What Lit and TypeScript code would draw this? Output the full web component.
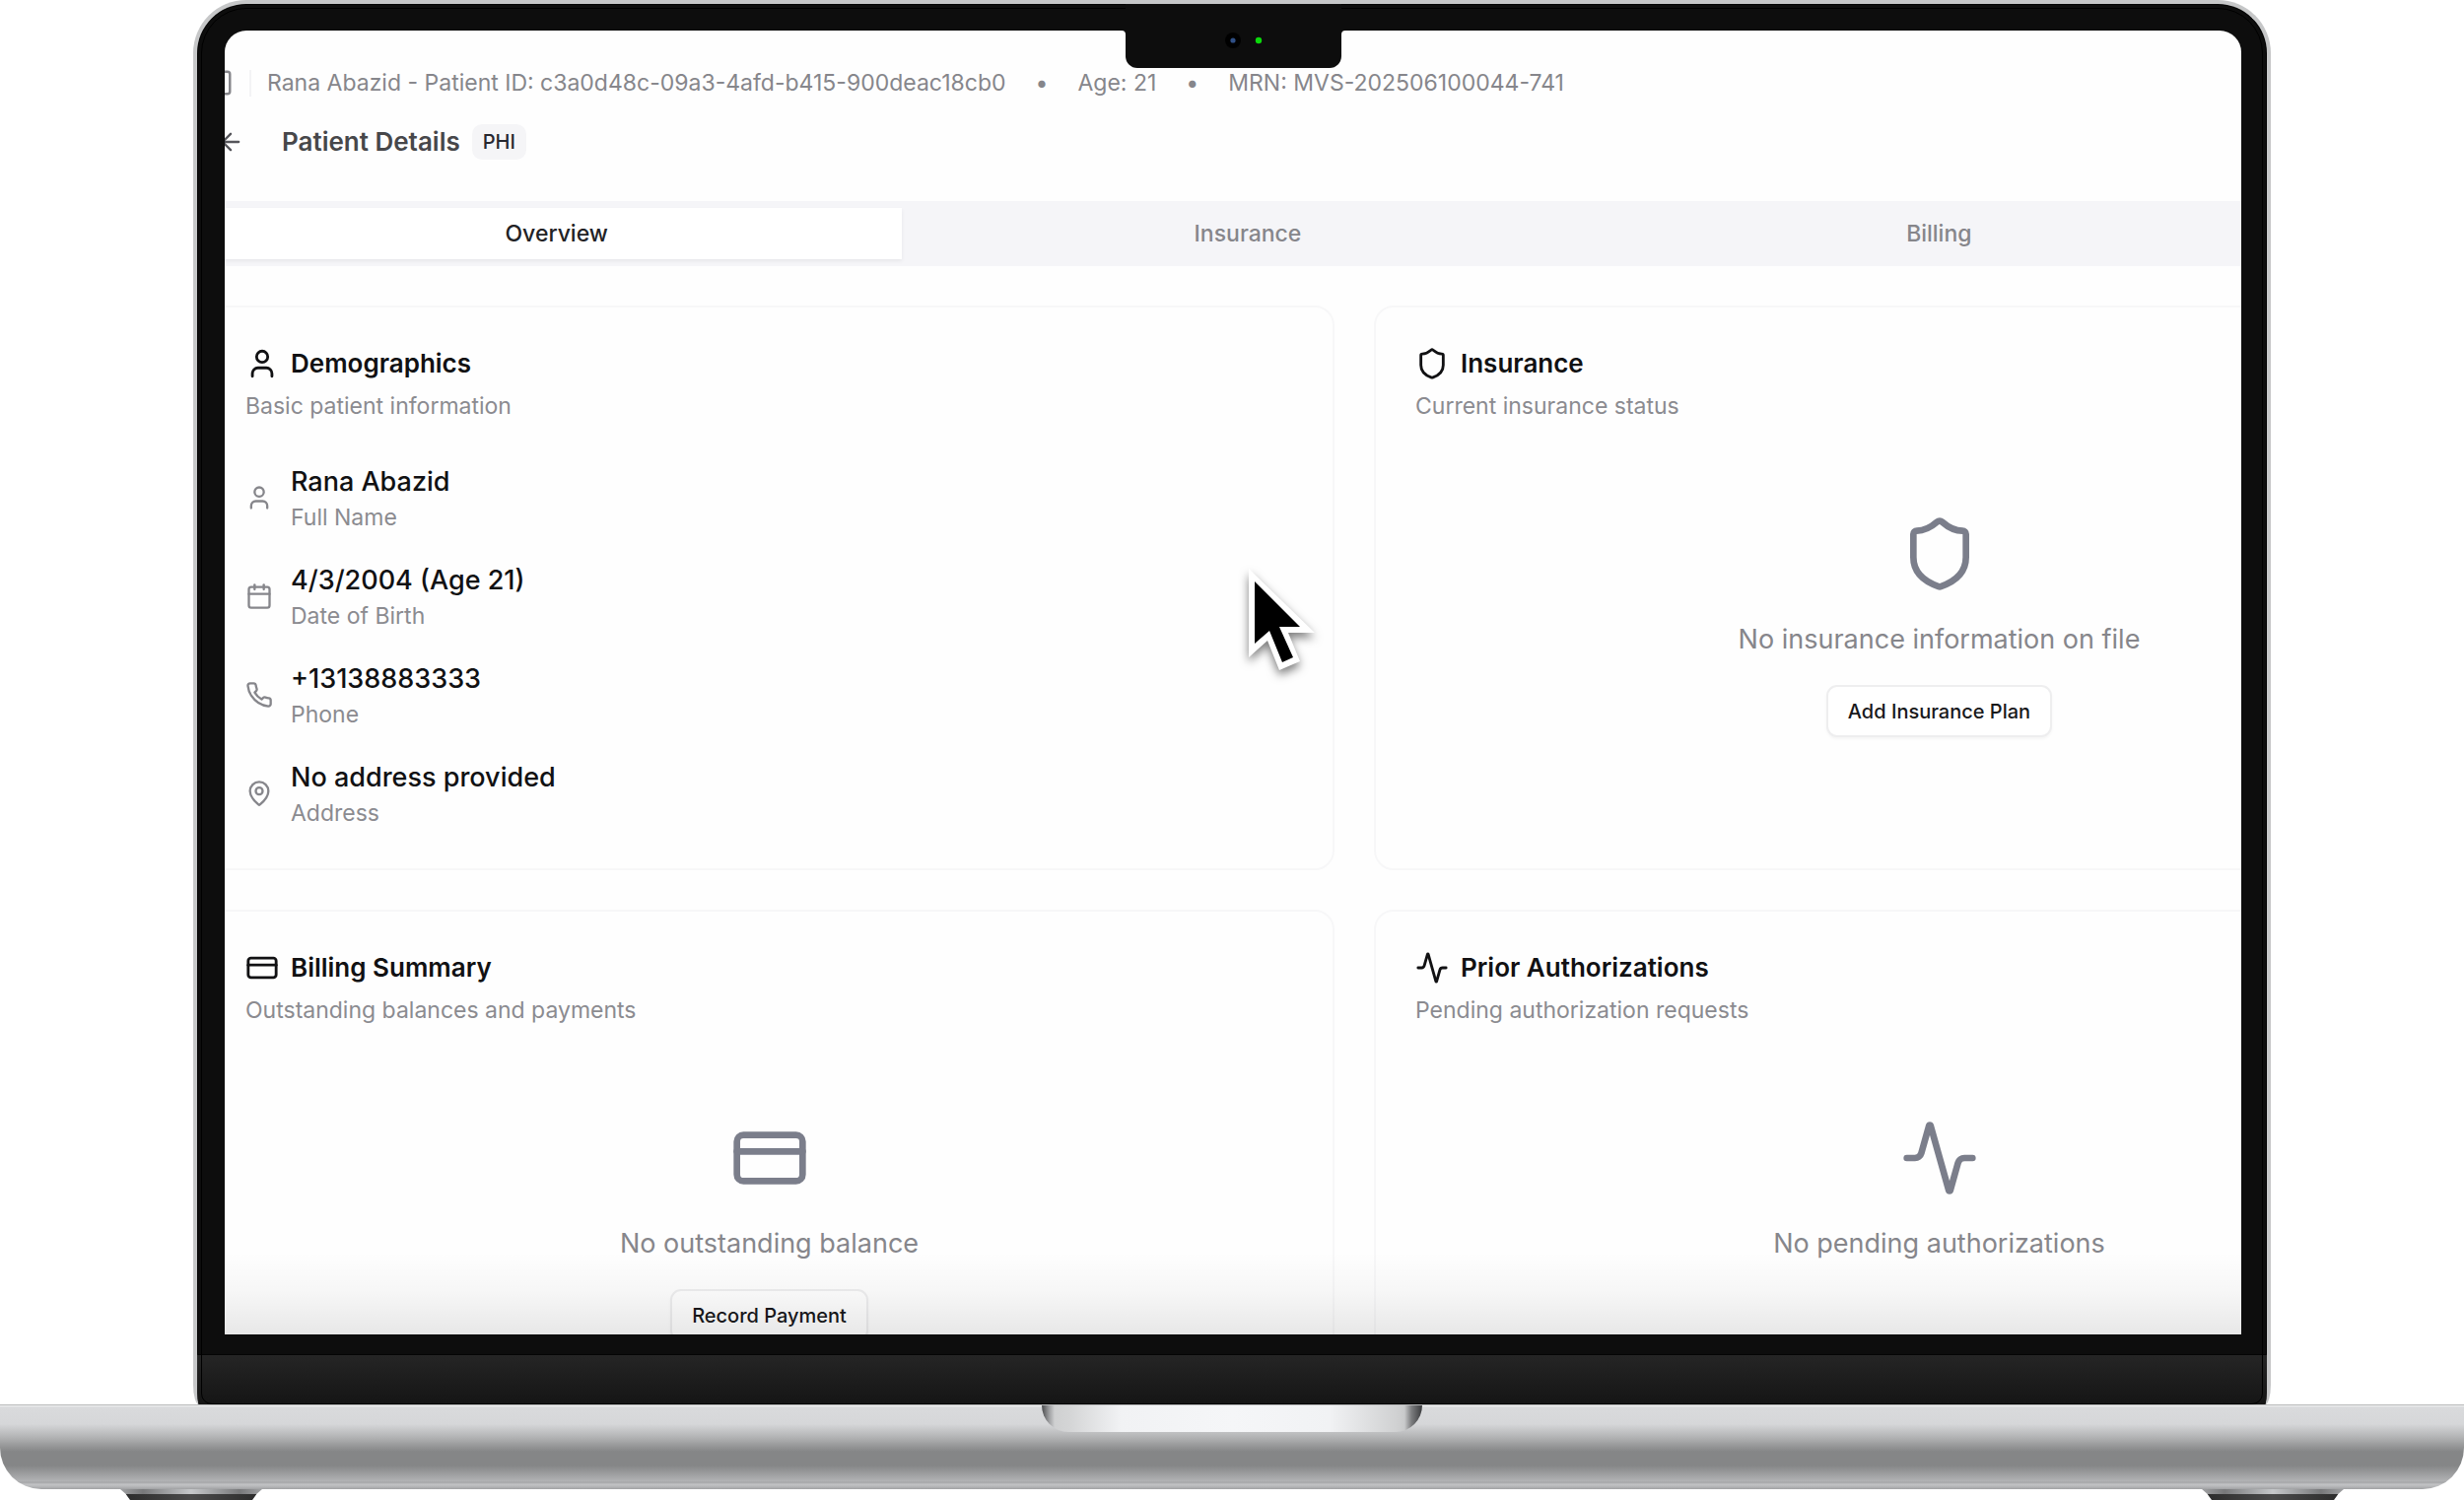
import { LitElement, html, css, svg, nothing, type SVGTemplateResult, type TemplateResult } from "lit";
import { customElement, property, state } from "lit/decorators.js";
import { classMap } from "lit/directives/class-map.js";

/* Stroke icons, all on a 24-unit grid. */
const ICONS: Record<string, SVGTemplateResult> = {
  panel: svg`<rect x="3" y="3" width="18" height="18" rx="2"/><path d="M9 3v18"/>`,
  back: svg`<path d="m12 19-7-7 7-7"/><path d="M19 12H5"/>`,
  user: svg`<path d="M19 21v-2a4 4 0 0 0-4-4H9a4 4 0 0 0-4 4v2"/><circle cx="12" cy="7" r="4"/>`,
  calendar: svg`<path d="M8 2v4"/><path d="M16 2v4"/><rect x="3" y="4" width="18" height="18" rx="2"/><path d="M3 10h18"/>`,
  phone: svg`<path d="M22 16.92v3a2 2 0 0 1-2.18 2 19.79 19.79 0 0 1-8.63-3.07 19.5 19.5 0 0 1-6-6 19.79 19.79 0 0 1-3.07-8.67A2 2 0 0 1 4.11 2h3a2 2 0 0 1 2 1.72 12.84 12.84 0 0 0 .7 2.81 2 2 0 0 1-.45 2.11L8.09 9.91a16 16 0 0 0 6 6l1.27-1.27a2 2 0 0 1 2.11-.45 12.84 12.84 0 0 0 2.81.7A2 2 0 0 1 22 16.92z"/>`,
  pin: svg`<path d="M20 10c0 4.993-5.539 10.193-7.399 11.799a1 1 0 0 1-1.202 0C9.539 20.193 4 14.993 4 10a8 8 0 0 1 16 0"/><circle cx="12" cy="10" r="3"/>`,
  shield: svg`<path d="M20 13c0 5-3.5 7.5-7.66 8.95a1 1 0 0 1-.67-.01C7.5 20.5 4 18 4 13V6a1 1 0 0 1 1-1c2 0 4.5-1.2 6.24-2.72a1.17 1.17 0 0 1 1.52 0C14.51 3.81 17 5 19 5a1 1 0 0 1 1 1z"/>`,
  card: svg`<rect x="2" y="5" width="20" height="14" rx="2"/><path d="M2 10h20"/>`,
  activity: svg`<path d="M22 12h-2.48a2 2 0 0 0-1.93 1.46l-2.35 8.36a.25.25 0 0 1-.48 0L9.24 2.18a.25.25 0 0 0-.48 0l-2.35 8.36A2 2 0 0 1 4.49 12H2"/>`,
};

const icon = (name: string, cls: string): TemplateResult => html`
  <svg class="icon ${cls}" viewBox="0 0 24 24" aria-hidden="true">${ICONS[name]}</svg>
`;

const iconStyles = css`
  .icon {
    display: block;
    flex: none;
    fill: none;
    stroke: currentColor;
    stroke-width: 2;
    stroke-linecap: round;
    stroke-linejoin: round;
  }
`;

/* A bordered panel with an icon heading; its body is slotted in. */
@customElement("info-card")
class InfoCard extends LitElement {
  @property() icon = "user";
  @property() heading = "";
  @property() description = "";

  static styles = [
    iconStyles,
    css`
      :host {
        display: flex;
        flex-direction: column;
        gap: 40px;
        box-sizing: border-box;
        min-height: 573px;
        padding: 40px 40px 38px;
        border: 2px solid #f7f7f8;
        border-radius: 20px;
      }
      .head {
        display: flex;
        flex-direction: column;
        gap: 9px;
      }
      .title {
        display: flex;
        align-items: center;
        gap: 12px;
      }
      .title-icon {
        width: 34px;
        height: 34px;
      }
      h2 {
        margin: 0;
        font-size: 26px;
        line-height: 34px;
        font-weight: 600;
      }
      p {
        margin: 0;
        font-size: 23px;
        line-height: 34px;
        color: #8b8b90;
      }
    `,
  ];

  render() {
    return html`
      <div class="head">
        <div class="title">${icon(this.icon, "title-icon")}<h2>${this.heading}</h2></div>
        <p>${this.description}</p>
      </div>
      <slot></slot>
    `;
  }
}

/* Centred placeholder: large icon, message and an optional action. */
@customElement("empty-state")
class EmptyState extends LitElement {
  @property() icon = "shield";
  @property() message = "";
  @property() action = "";

  static styles = [
    iconStyles,
    css`
      :host {
        display: flex;
        flex-direction: column;
        align-items: center;
        padding-top: 53px;
      }
      .large {
        width: 80px;
        height: 80px;
        color: #7b7e8b;
      }
      p {
        margin: 27px 0 26px;
        font-size: 27px;
        line-height: 40px;
        color: #86868b;
      }
      button {
        height: 53px;
        padding: 0 20px;
        border: 2px solid #eeeeef;
        border-radius: 11px;
        background: #fff;
        box-shadow: 0 2px 3px rgba(0, 0, 0, 0.04);
        font: 500 20px/30px Inter, "Liberation Sans", sans-serif;
        color: #18181b;
      }
    `,
  ];

  render() {
    return html`
      ${icon(this.icon, "large")}
      <p>${this.message}</p>
      ${this.action ? html`<button type="button">${this.action}</button>` : nothing}
    `;
  }
}

/* The patient record page. */
@customElement("patient-page")
class PatientPage extends LitElement {
  @state() private tab = "Overview";

  private tabs = ["Overview", "Insurance", "Billing"];

  private facts = [
    { icon: "user", value: "Rana Abazid", label: "Full Name" },
    { icon: "calendar", value: "4/3/2004 (Age 21)", label: "Date of Birth" },
    { icon: "phone", value: "+13138883333", label: "Phone" },
    { icon: "pin", value: "No address provided", label: "Address" },
  ];

  static styles = [
    iconStyles,
    css`
      :host {
        display: block;
        /* The page is wider than the screen it is shown on. */
        margin: 0 -267px 0 -21px;
        padding-top: 31px;
        font-family: Inter, "Liberation Sans", sans-serif;
        color: #111113;
      }
      button {
        border: 0;
        padding: 0;
        background: none;
        font: inherit;
        color: inherit;
      }
      .crumbs {
        display: flex;
        align-items: center;
        height: 44px;
        font-size: 23px;
        color: #86868b;
      }
      .nav-icon {
        width: 30px;
        height: 30px;
      }
      .rule {
        width: 2px;
        height: 27px;
        margin: 0 16px;
        background: #f3f3f5;
      }
      .meta {
        display: flex;
        gap: 30px;
      }
      .heading {
        display: flex;
        align-items: center;
        height: 36px;
        margin-top: 20px;
      }
      .back {
        display: grid;
        place-items: center;
        width: 54px;
        height: 36px;
        margin-right: 25px;
        color: #55555a;
      }
      .small {
        width: 28px;
        height: 28px;
      }
      h1 {
        margin: 0;
        font-size: 26px;
        line-height: 36px;
        font-weight: 600;
        color: #47474a;
      }
      .badge {
        margin-left: 12px;
        padding: 0 11px;
        border-radius: 10px;
        background: #f5f5f7;
        font-size: 20px;
        line-height: 36px;
        font-weight: 500;
        color: #27272f;
      }
      .tabs {
        display: grid;
        grid-template-columns: repeat(3, 1fr);
        height: 66px;
        box-sizing: border-box;
        margin: 42px 216px 40px 0;
        padding: 7px;
        background: #f5f5f8;
      }
      .tab {
        font-size: 23px;
        font-weight: 500;
        color: #86868b;
      }
      .tab.active {
        background: #fff;
        box-shadow: 0 2px 4px rgba(0, 0, 0, 0.06);
        color: #222225;
      }
      .cards {
        display: grid;
        grid-template-columns: 1fr 1fr;
        gap: 40px;
      }
      .facts {
        display: flex;
        flex-direction: column;
        gap: 26px;
        margin: 0;
        padding: 0;
        list-style: none;
      }
      .fact {
        display: flex;
        align-items: center;
        gap: 18px;
      }
      .fact-icon {
        margin-bottom: 3px;
        color: #86868b;
      }
      .value {
        font-size: 27px;
        line-height: 39px;
        font-weight: 500;
      }
      .label {
        font-size: 23px;
        line-height: 35px;
        color: #8b8b90;
      }
    `,
  ];

  render() {
    return html`
      <nav class="crumbs">
        <button type="button" aria-label="Toggle sidebar">${icon("panel", "nav-icon")}</button>
        <span class="rule"></span>
        <div class="meta">
          <span>Rana Abazid - Patient ID: c3a0d48c-09a3-4afd-b415-900deac18cb0</span>
          <span>•</span>
          <span>Age: 21</span>
          <span>•</span>
          <span>MRN: MVS-202506100044-741</span>
        </div>
      </nav>
      <header class="heading">
        <button class="back" type="button" aria-label="Back">${icon("back", "small")}</button>
        <h1>Patient Details</h1>
        <span class="badge">PHI</span>
      </header>
      <div class="tabs" role="tablist">
        ${this.tabs.map(
          (t) => html`<button
            type="button"
            role="tab"
            class=${classMap({ tab: true, active: t === this.tab })}
            aria-selected=${t === this.tab ? "true" : "false"}
            @click=${() => (this.tab = t)}
          >${t}</button>`,
        )}
      </div>
      <main class="cards">
        <info-card icon="user" heading="Demographics" description="Basic patient information">
          <ul class="facts">
            ${this.facts.map(
              (f) => html`<li class="fact">
                ${icon(f.icon, "small fact-icon")}
                <div>
                  <div class="value">${f.value}</div>
                  <div class="label">${f.label}</div>
                </div>
              </li>`,
            )}
          </ul>
        </info-card>
        <info-card icon="shield" heading="Insurance" description="Current insurance status">
          <empty-state icon="shield" message="No insurance information on file" action="Add Insurance Plan"></empty-state>
        </info-card>
        <info-card icon="card" heading="Billing Summary" description="Outstanding balances and payments">
          <empty-state icon="card" message="No outstanding balance" action="Record Payment"></empty-state>
        </info-card>
        <info-card icon="activity" heading="Prior Authorizations" description="Pending authorization requests">
          <empty-state icon="activity" message="No pending authorizations"></empty-state>
        </info-card>
      </main>
    `;
  }
}

/* Laptop frame with the page on its screen. */
@customElement("app-root")
class AppRoot extends LitElement {
  static styles = css`
    :host {
      display: block;
      overflow: hidden;
      background: #fff;
    }
    .lid {
      position: relative;
      box-sizing: border-box;
      width: 84.32%;
      margin: 0 auto;
      border: solid #c6c7c8;
      border-width: 4px 4px 0;
      border-radius: 54px 54px 6px 6px / 54px 54px 20px 20px;
      background: #0d0d0d;
      box-shadow: inset 0 0 0 1px #000;
      overflow: hidden;
    }
    .bezel {
      padding: 27px 26px 20px 28px;
    }
    .outline {
      position: absolute;
      inset: 4px 4px 0;
      border: 1px solid #000;
      border-radius: 46px 46px 11px 11px;
      pointer-events: none;
    }
    .screen {
      position: relative;
      aspect-ratio: 2046 / 1323;
      border-radius: 22px 22px 0 0;
      background: #fefefe;
      overflow: hidden;
    }
    .shade {
      position: absolute;
      inset: auto 0 0;
      height: 84px;
      background: linear-gradient(rgba(0, 0, 0, 0), rgba(0, 0, 0, 0.03) 50%, rgba(0, 0, 0, 0.09));
      pointer-events: none;
    }
    .notch {
      position: absolute;
      top: 0;
      left: 50%;
      width: 219px;
      height: 65px;
      margin-left: -108px;
      border-radius: 0 0 12px 12px;
      background: #0d0d0d;
    }
    .notch svg {
      display: block;
      width: 219px;
      height: 65px;
      overflow: visible;
    }
    .cursor {
      position: absolute;
      left: 50.8%;
      top: 41.3%;
      width: 68px;
      height: 104px;
      overflow: visible;
      filter: drop-shadow(0 5px 5px rgba(0, 0, 0, 0.5));
      pointer-events: none;
    }
    .chin {
      height: 51px;
      border-top: 1px solid #050505;
      box-sizing: border-box;
      background: linear-gradient(#252525, #151515);
    }
    .base {
      display: flex;
      justify-content: center;
      height: 86px;
      box-sizing: border-box;
      border-top: 1px solid #b9babb;
      border-radius: 0 0 42px 42px;
      background: linear-gradient(
        #f1f1f2 0,
        #d9dadc 2px,
        #d6d7d9 19px,
        #b3b4b5 32px,
        #858687 47px,
        #858687 61px,
        #b2b3b5 77px,
        #a2a3a5 78px,
        #c2c3c5 80px,
        #b9babc 82px,
        #a0a1a3 85px
      );
    }
    .grip {
      width: 386px;
      height: 27px;
      border-radius: 0 0 27px 27px;
      background: linear-gradient(
        90deg,
        #4b4c4e 0,
        #a3a4a6 8px,
        #cfd0d1 13px,
        #d4d5d6 28px,
        #f1f2f4 80px,
        #f5f6f8 193px,
        #f1f2f4 292px,
        #d0d1d2 360px,
        #c9cacb 368px,
        #7c7d7f 375px,
        #3a3b3d 386px
      );
    }
    .feet {
      display: flex;
      justify-content: space-between;
      padding: 0 122px;
    }
    .foot {
      width: 144px;
      height: 11px;
      clip-path: polygon(0 0, 100% 0, 96% 45%, 93% 100%, 7% 100%, 4% 45%);
      background:
        linear-gradient(90deg, #2a2a2a, #4a4a4a 50%, #2a2a2a) 0 5px / 100% 6px no-repeat,
        linear-gradient(90deg, #a0a1a3, #77787a 16%, #c6c8ca 50%, #77787a 84%, #a0a1a3);
    }
  `;

  render() {
    return html`
      <div class="lid">
        <div class="bezel">
          <div class="screen">
            <patient-page></patient-page>
            <div class="shade"></div>
            <svg class="cursor" viewBox="0 0 68 104" aria-hidden="true">
              <path fill="#fff" d="M0 0 67 65H40L52 94 31 103 19 73 0 90Z" />
              <path fill="#000" d="M6 13 52 59H31L45 90 34 95 21 63 6 76Z" />
            </svg>
          </div>
        </div>
        <div class="chin"></div>
        <div class="outline"></div>
        <div class="notch">
          <svg viewBox="0 0 219 65" aria-hidden="true">
            <path fill="#0d0d0d" d="M-4 27Q0 27 0 31V27ZM223 27Q219 27 219 31V27Z" />
            <circle cx="109" cy="37" r="8" fill="#000" />
            <circle cx="109" cy="37" r="2.6" fill="#2f4f86" />
            <circle cx="135" cy="37" r="3.2" fill="#0bd90b" />
          </svg>
        </div>
      </div>
      <div class="base"><div class="grip"></div></div>
      <div class="feet"><div class="foot"></div><div class="foot"></div></div>
    `;
  }
}
